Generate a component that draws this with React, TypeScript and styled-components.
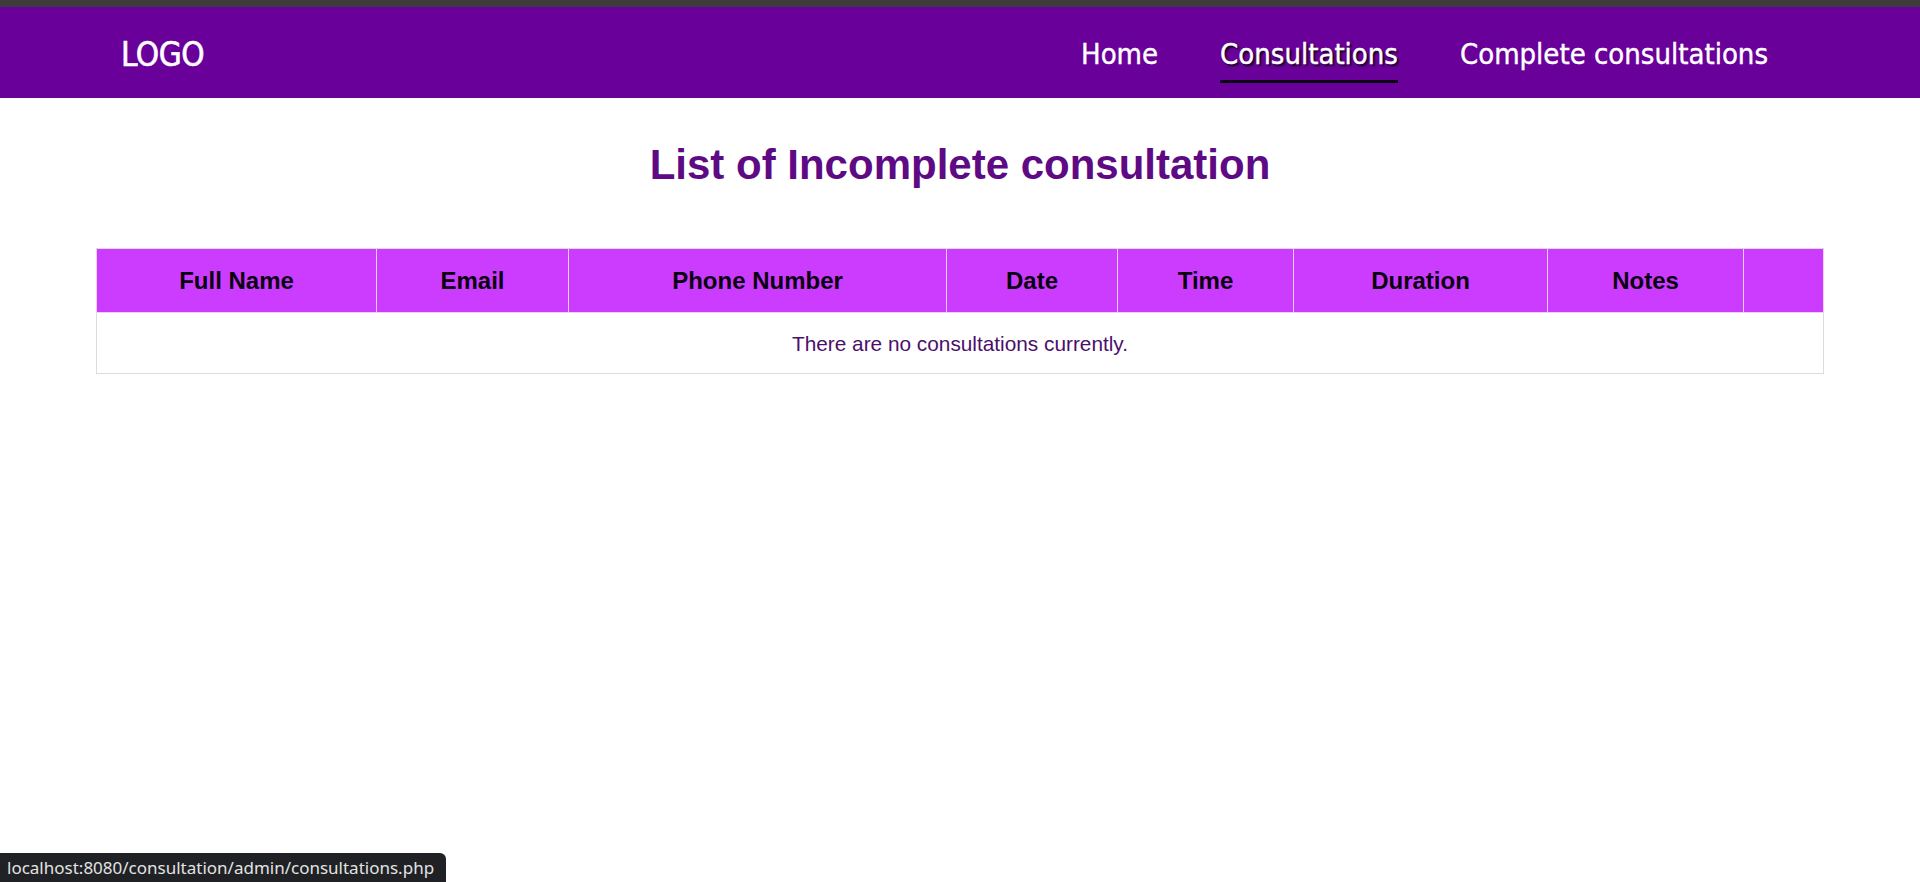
import React from 'react';
import styled, { createGlobalStyle } from 'styled-components';

const GlobalStyle = createGlobalStyle`
  html, body {
    margin: 0;
    padding: 0;
    background: #ffffff;
  }
  body {
    font-family: 'Liberation Sans', Arial, sans-serif;
  }
`;

const Page = styled.div`
  min-height: 100vh;
  display: flex;
  flex-direction: column;
`;

const TopStrip = styled.div`
  height: 7px;
  background: #3c3c3c;
`;

const NavBar = styled.header`
  box-sizing: border-box;
  height: 91px;
  background: #690099;
  display: flex;
  align-items: center;
  justify-content: space-between;
  padding: 4px 152px 0 121px;
  font-family: 'DejaVu Sans Condensed', 'DejaVu Sans', sans-serif;
  font-stretch: condensed;
  color: #ffffff;
`;

const Logo = styled.div`
  font-size: 33px;
  letter-spacing: -0.5px;
  -webkit-text-stroke: 0.6px #ffffff;
`;

const NavLinks = styled.nav`
  display: flex;
  align-items: center;
  gap: 62px;
`;

const NavLink = styled.a<{ $active?: boolean }>`
  position: relative;
  font-size: 29px;
  color: #ffffff;
  text-decoration: none;
  cursor: pointer;
  line-height: 1;
  padding: 0;
  -webkit-text-stroke: 0.4px #ffffff;
  text-shadow: ${(p) => (p.$active ? '2px 2px 2px rgba(0, 0, 0, 0.85)' : 'none')};

  &::after {
    content: '';
    position: absolute;
    left: 0;
    right: 0;
    bottom: -14px;
    height: 3px;
    background: ${(p) => (p.$active ? '#0d0014' : 'transparent')};
  }
`;

const Main = styled.main`
  padding: 43px 0 0;
`;

const Title = styled.h1`
  margin: 0 0 59px;
  text-align: center;
  font-family: 'Liberation Sans', Arial, sans-serif;
  font-size: 42px;
  font-weight: 700;
  color: #5e0a84;
`;

const Table = styled.table`
  width: 1727px;
  margin: 0 auto;
  border-collapse: collapse;
  table-layout: fixed;
  border: 1px solid #dcdcdc;
`;

const HeadCell = styled.th<{ $w: number }>`
  box-sizing: border-box;
  width: ${(p) => p.$w}px;
  background: #cc3cff;
  color: #0a0010;
  font-size: 24px;
  font-weight: 700;
  text-align: center;
  padding: 18px 8px;
  line-height: 27px;
  border: 1px solid #ecd0f5;
  border-top-color: #dcdcdc;
`;

const EmptyCell = styled.td`
  text-align: center;
  font-size: 20.8px;
  color: #4b0f6b;
  padding: 19px 8px 17px;
  line-height: 24px;
  border-bottom: 1px solid #dcdcdc;
`;

const StatusTip = styled.div`
  position: fixed;
  left: 0;
  bottom: 0;
  height: 29px;
  padding: 0 12px 0 7px;
  display: flex;
  align-items: center;
  background: #202124;
  color: #e3e3e3;
  border-top-right-radius: 6px;
  font-family: 'Noto Sans', 'Open Sans', sans-serif;
  font-size: 17px;
`;

const columns = [
  { label: 'Full Name', w: 280 },
  { label: 'Email', w: 192 },
  { label: 'Phone Number', w: 378 },
  { label: 'Date', w: 171 },
  { label: 'Time', w: 176 },
  { label: 'Duration', w: 254 },
  { label: 'Notes', w: 196 },
  { label: '', w: 80 },
];

const App: React.FC = () => {
  return (
    <Page>
      <GlobalStyle />
      <TopStrip />
      <NavBar>
        <Logo>LOGO</Logo>
        <NavLinks>
          <NavLink>Home</NavLink>
          <NavLink $active>Consultations</NavLink>
          <NavLink>Complete consultations</NavLink>
        </NavLinks>
      </NavBar>

      <Main>
        <Title>List of Incomplete consultation</Title>
        <Table>
          <thead>
            <tr>
              {columns.map((c, i) => (
                <HeadCell key={i} $w={c.w}>
                  {c.label}
                </HeadCell>
              ))}
            </tr>
          </thead>
          <tbody>
            <tr>
              <EmptyCell colSpan={columns.length}>There are no consultations currently.</EmptyCell>
            </tr>
          </tbody>
        </Table>
      </Main>

      <StatusTip>localhost:8080/consultation/admin/consultations.php</StatusTip>
    </Page>
  );
};

export default App;
